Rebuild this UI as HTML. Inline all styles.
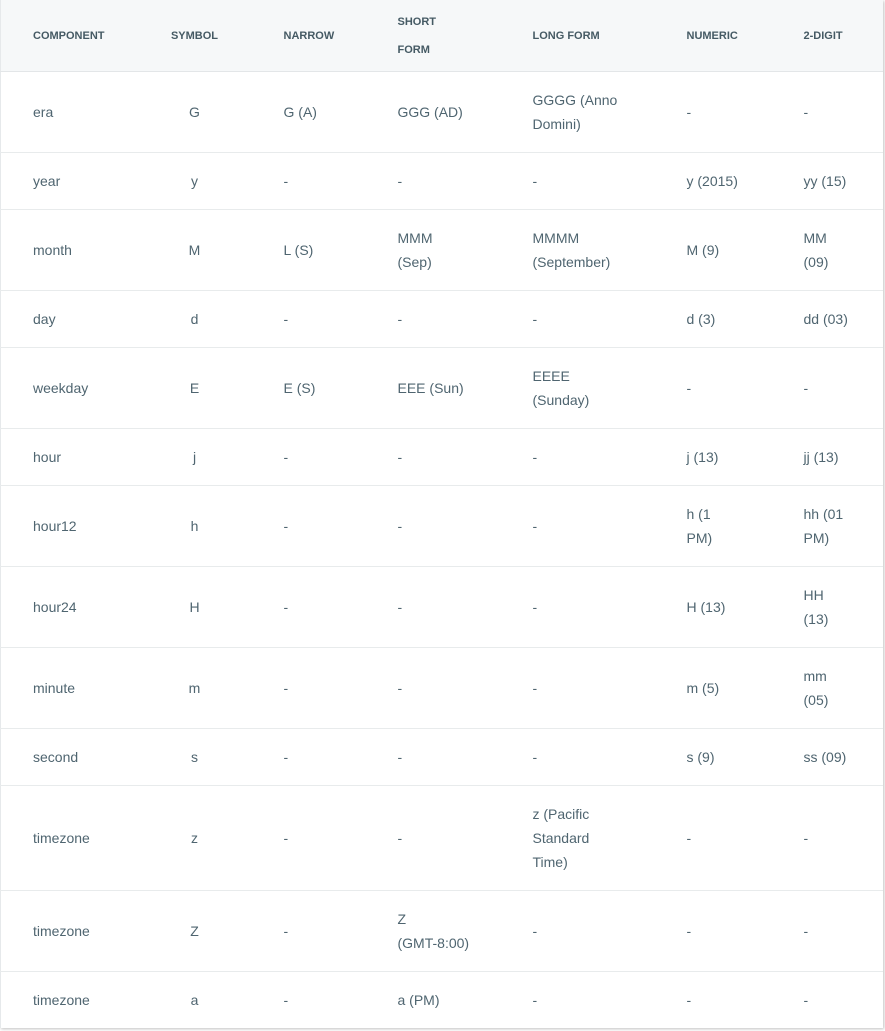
<!DOCTYPE html>
<html><head><meta charset="utf-8"><style>
body{margin:0;background:#fff;font-family:"Liberation Sans",sans-serif;}
table{position:absolute;left:0;top:0;width:882px;border-collapse:collapse;table-layout:fixed;box-shadow:1px 1px 3px rgba(0,0,0,.25);border-left:1px solid #e6e9eb;}
td,th{padding:0 0 0 33px;text-align:left;white-space:nowrap;vertical-align:middle;}
td:first-child,th:first-child{padding-left:32px;}
th{font-size:11px;font-weight:bold;color:#455a64;line-height:28px;height:71px;background:#f6f8f9;border-bottom:1px solid #e3e6e8;}
td{font-size:14px;color:#4f6570;line-height:24px;padding-top:16px;padding-bottom:16px;border-bottom:1px solid #e8ebec;}
td:nth-child(2),th:nth-child(2){text-align:center;padding-left:0;}
tr:last-child td{border-bottom:none;}
</style></head><body>
<table>
<colgroup><col style="width:138px"><col style="width:112px"><col style="width:114px"><col style="width:135px"><col style="width:154px"><col style="width:117px"><col style="width:112px"></colgroup>
<tr><th>COMPONENT</th><th>SYMBOL</th><th>NARROW</th><th>SHORT<br>FORM</th><th>LONG FORM</th><th>NUMERIC</th><th>2-DIGIT</th></tr>
<tr><td>era</td><td>G</td><td>G (A)</td><td>GGG (AD)</td><td>GGGG (Anno<br>Domini)</td><td>-</td><td>-</td></tr>
<tr><td>year</td><td>y</td><td>-</td><td>-</td><td>-</td><td>y (2015)</td><td>yy (15)</td></tr>
<tr><td>month</td><td>M</td><td>L (S)</td><td>MMM<br>(Sep)</td><td>MMMM<br>(September)</td><td>M (9)</td><td>MM<br>(09)</td></tr>
<tr><td>day</td><td>d</td><td>-</td><td>-</td><td>-</td><td>d (3)</td><td>dd (03)</td></tr>
<tr><td>weekday</td><td>E</td><td>E (S)</td><td>EEE (Sun)</td><td>EEEE<br>(Sunday)</td><td>-</td><td>-</td></tr>
<tr><td>hour</td><td>j</td><td>-</td><td>-</td><td>-</td><td>j (13)</td><td>jj (13)</td></tr>
<tr><td>hour12</td><td>h</td><td>-</td><td>-</td><td>-</td><td>h (1<br>PM)</td><td>hh (01<br>PM)</td></tr>
<tr><td>hour24</td><td>H</td><td>-</td><td>-</td><td>-</td><td>H (13)</td><td>HH<br>(13)</td></tr>
<tr><td>minute</td><td>m</td><td>-</td><td>-</td><td>-</td><td>m (5)</td><td>mm<br>(05)</td></tr>
<tr><td>second</td><td>s</td><td>-</td><td>-</td><td>-</td><td>s (9)</td><td>ss (09)</td></tr>
<tr><td>timezone</td><td>z</td><td>-</td><td>-</td><td>z (Pacific<br>Standard<br>Time)</td><td>-</td><td>-</td></tr>
<tr><td>timezone</td><td>Z</td><td>-</td><td>Z<br>(GMT-8:00)</td><td>-</td><td>-</td><td>-</td></tr>
<tr><td>timezone</td><td>a</td><td>-</td><td>a (PM)</td><td>-</td><td>-</td><td>-</td></tr>
</table>
</body></html>
